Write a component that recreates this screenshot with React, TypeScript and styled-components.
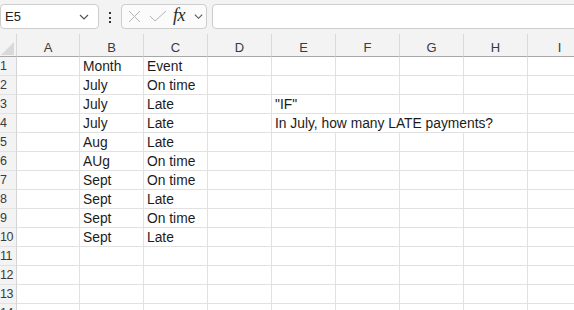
import React from 'react';
import styled, { createGlobalStyle } from 'styled-components';

const GlobalStyle = createGlobalStyle`
  html, body {
    margin: 0;
    padding: 0;
    overflow: hidden;
    background: #f3f3f3;
    font-family: "Liberation Sans", Arial, sans-serif;
  }
`;

const COLS = ['A', 'B', 'C', 'D', 'E', 'F', 'G', 'H', 'I'];
const ROW_COUNT = 14;

type CellData = { text: string; span?: number };

const data: Record<string, CellData> = {
  B1: { text: 'Month' }, C1: { text: 'Event' },
  B2: { text: 'July' }, C2: { text: 'On time' },
  B3: { text: 'July' }, C3: { text: 'Late' }, E3: { text: '"IF"' },
  B4: { text: 'July' }, C4: { text: 'Late' }, E4: { text: 'In July, how many LATE payments?', span: 4 },
  B5: { text: 'Aug' }, C5: { text: 'Late' },
  B6: { text: 'AUg' }, C6: { text: 'On time' },
  B7: { text: 'Sept' }, C7: { text: 'On time' },
  B8: { text: 'Sept' }, C8: { text: 'Late' },
  B9: { text: 'Sept' }, C9: { text: 'On time' },
  B10: { text: 'Sept' }, C10: { text: 'Late' },
};

const Page = styled.div`
  width: 574px;
  height: 310px;
  overflow: hidden;
  background: #f3f3f3;
`;

const Toolbar = styled.div`
  height: 34px;
  display: flex;
  align-items: flex-start;
  padding-top: 4px;
  box-sizing: border-box;
`;

const Box = styled.div<{ $width?: number }>`
  height: 25px;
  box-sizing: border-box;
  border: 1px solid #cdcdcd;
  border-radius: 4px;
  background: #ffffff;
  display: flex;
  align-items: center;
  ${p => (p.$width ? `width: ${p.$width}px;` : 'flex: 1;')}
`;

const NameBox = styled(Box)`
  padding: 0 8px 0 4px;
  justify-content: space-between;
  font-size: 13px;
  color: #222;
`;

const Dots = styled.div`
  width: 22px;
  display: flex;
  flex-direction: column;
  align-items: center;
  gap: 2.6px;
  padding-top: 8px;

  span {
    width: 2px;
    height: 2px;
    background: #333;
  }
`;

const FxGroup = styled(Box)`
  padding: 0 2px 0 6px;
  gap: 8px;
  background: #fbfbfb;
`;

const Fx = styled.span`
  font-family: "Liberation Serif", "Times New Roman", serif;
  font-style: italic;
  font-size: 18px;
  color: #2a2a2a;
  margin-left: -2px;
  margin-top: -2px;
  letter-spacing: -0.5px;
`;

const FormulaBar = styled(Box)`
  margin-left: 5px;
  margin-right: -10px;
`;

const Grid = styled.div`
  display: grid;
  grid-template-columns: 17px 63px repeat(8, 64px);
  grid-auto-rows: 19px;
  grid-template-rows: 23px;
  width: 609px;
`;

const Corner = styled.div`
  position: relative;
  border-right: 1px solid #d8d8d8;
  border-bottom: 1px solid #a8a8a8;
  box-sizing: border-box;

  svg {
    position: absolute;
    left: 1px;
    bottom: 1px;
  }
`;

const ColHead = styled.div`
  box-sizing: border-box;
  border-right: 1px solid #dadada;
  border-bottom: 1px solid #a8a8a8;
  display: flex;
  align-items: center;
  justify-content: center;
  padding-top: 4px;
  font-size: 13px;
  color: #3a3a3a;
`;

const RowHead = styled.div`
  box-sizing: border-box;
  border-right: 1px solid #d4d4d4;
  border-bottom: 1px solid #e2e2e2;
  display: flex;
  align-items: center;
  font-size: 12.5px;
  color: #3a3a3a;
  white-space: nowrap;
  letter-spacing: -0.5px;
`;

const Cell = styled.div<{ $span?: number }>`
  box-sizing: border-box;
  background: #ffffff;
  border-right: 1px solid #e1e1e1;
  border-bottom: 1px solid #e1e1e1;
  display: flex;
  align-items: center;
  padding: 1px 2px 0 3px;
  font-size: 13.8px;
  color: #1c1c1c;
  white-space: nowrap;
  ${p => (p.$span ? `grid-column: span ${p.$span};` : '')}
`;

const Chevron = ({ size = 11 }: { size?: number }) => (
  <svg width={size} height={size} viewBox="0 0 12 12" fill="none">
    <path d="M2 4 L6 8 L10 4" stroke="#555" strokeWidth="1.2" />
  </svg>
);

const App: React.FC = () => {
  const rows = [];
  for (let r = 1; r <= ROW_COUNT; r++) {
    rows.push(
      <RowHead key={`h${r}`}>{r}</RowHead>
    );
    let skip = 0;
    COLS.forEach(c => {
      if (skip > 0) {
        skip--;
        return;
      }
      const cell = data[`${c}${r}`];
      if (cell?.span) skip = cell.span - 1;
      rows.push(
        <Cell key={`${c}${r}`} $span={cell?.span}>{cell?.text}</Cell>
      );
    });
  }

  return <>
    <GlobalStyle />
    <Page>
      <Toolbar>
        <NameBox $width={99}>
          <span>E5</span>
          <Chevron size={12} />
        </NameBox>
        <Dots><span /><span /><span /></Dots>
        <FxGroup $width={86}>
          <svg width="13" height="13" viewBox="0 0 13 13">
            <path d="M1 1 L12 12 M12 1 L1 12" stroke="#b4b4b4" strokeWidth="1" />
          </svg>
          <svg width="18" height="13" viewBox="0 0 18 13">
            <path d="M1 6 L6 11 L17 1" stroke="#b4b4b4" strokeWidth="1" fill="none" />
          </svg>
          <Fx>fx</Fx>
          <Chevron size={11} />
        </FxGroup>
        <FormulaBar />
      </Toolbar>
      <Grid>
        <Corner>
          <svg width="13" height="13" viewBox="0 0 13 13">
            <path d="M13 0 L13 13 L0 13 Z" fill="#d9d9d9" />
          </svg>
        </Corner>
        {COLS.map(c => <ColHead key={c}>{c}</ColHead>)}
        {rows}
      </Grid>
    </Page>
  </>
}

export default App;
